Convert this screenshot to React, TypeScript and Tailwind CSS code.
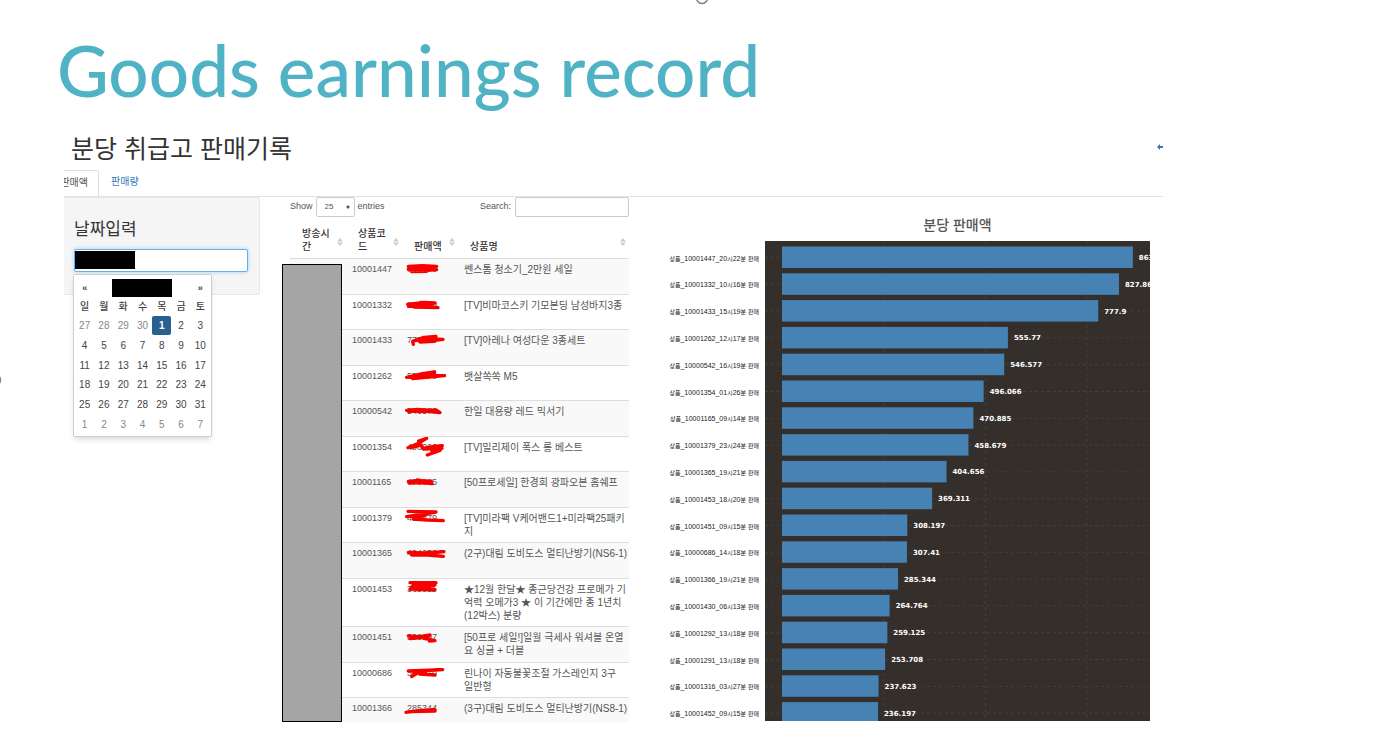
import React from "react";

type Product = { code: string; sales: string; name: string[]; mark: string };

const products: Product[] = [
  { code: "10001447", sales: "863000", name: ["쎈스톰 청소기_2만원 세일"], mark: "13,22 55,20 98,22 13,31 98,32 23,38 68,37 45,24 80,28" },
  { code: "10001332", sales: "827860", name: ["[TV]비마코스키 기모본딩 남성바지3종"], mark: "11,28 60,22 93,24 13,34 60,32 102,38 30,36 50,22" },
  { code: "10001433", sales: "777900", name: ["[TV]아레나 여성다운 3종세트"], mark: "28,43 26,34 60,22 96,19 34,32 70,26 117,28 48,36 90,34" },
  { code: "10001262", sales: "555770", name: ["뱃살쏙쏙 M5"], mark: "8,34 50,24 92,18 14,33 70,28 122,29 26,38 80,24" },
  { code: "10000542", sales: "546577", name: ["한일 대용량 레드 믹서기"], mark: "8,28 40,25 75,28 98,28 108,35 70,31 13,31" },
  { code: "10001354", sales: "496066", name: ["[TV]밀리제이 폭스 롱 베스트"], mark: "12,32 40,20 22,32 50,24 44,12 68,4 48,16 56,34 90,28 115,26 58,36 114,34 84,42 108,40 70,54" },
  { code: "10001165", sales: "470885", name: ["[50프로세일] 한경희 광파오븐 홈쉐프"], mark: "13,28 50,26 82,28 16,33 50,32 84,35 40,24 70,30" },
  { code: "10001379", sales: "458679", name: ["[TV]미라팩 V케어밴드1+미라팩25패키", "지"], mark: "12,10 96,12 60,18 8,26 68,20 28,33 70,36 118,38" },
  { code: "10001365", sales: "404656", name: ["(2구)대림 도비도스 멀티난방기(NS6-1)"], mark: "13,28 60,30 120,26 23,36 70,36 118,40 38,32" },
  { code: "10001453", sales: "369311", name: ["★12월 한달★ 종근당건강 프로메가 기", "억력 오메가3 ★ 이 기간에만 종 1년치", "(12박스) 분량"], mark: "18,11 96,11 28,18 18,31 93,18 36,32 93,32 50,22" },
  { code: "10001451", sales: "308197", name: ["[50프로 세일!]일월 극세사 워셔블 온열", "요 싱글 + 더블"], mark: "13,27 58,31 18,35 78,24 60,34 93,41 76,42" },
  { code: "10000686", sales: "307410", name: ["린나이 자동불꽃조절 가스레인지 3구", "일반형"], mark: "13,24 116,20 40,24 23,41 48,26 70,34 93,36 48,33" },
  { code: "10001366", sales: "285344", name: ["(3구)대림 도비도스 멀티난방기(NS8-1)"], mark: "6,43 50,37 93,36 18,41 93,39" },
];

const bars: [string, number, string][] = [
  ["상품_10001447_20시22분 판매", 863, "863.000"],
  ["상품_10001332_10시16분 판매", 829, "827.86"],
  ["상품_10001433_15시19분 판매", 777.9, "777.9"],
  ["상품_10001262_12시17분 판매", 555.77, "555.77"],
  ["상품_10000542_16시19분 판매", 546.577, "546.577"],
  ["상품_10001354_01시26분 판매", 496.066, "496.066"],
  ["상품_10001165_09시14분 판매", 470.885, "470.885"],
  ["상품_10001379_23시24분 판매", 458.679, "458.679"],
  ["상품_10001365_19시21분 판매", 404.656, "404.656"],
  ["상품_10001453_18시20분 판매", 369.311, "369.311"],
  ["상품_10001451_09시15분 판매", 308.197, "308.197"],
  ["상품_10000686_14시18분 판매", 307.41, "307.41"],
  ["상품_10001366_19시21분 판매", 285.344, "285.344"],
  ["상품_10001430_06시13분 판매", 264.764, "264.764"],
  ["상품_10001292_13시18분 판매", 259.125, "259.125"],
  ["상품_10001291_13시18분 판매", 253.708, "253.708"],
  ["상품_10001316_03시27분 판매", 237.623, "237.623"],
  ["상품_10001452_09시15분 판매", 236.197, "236.197"],
];

const weekdays = ["일", "월", "화", "수", "목", "금", "토"];
const weeks = [
  [27, 28, 29, 30, 1, 2, 3],
  [4, 5, 6, 7, 8, 9, 10],
  [11, 12, 13, 14, 15, 16, 17],
  [18, 19, 20, 21, 22, 23, 24],
  [25, 26, 27, 28, 29, 30, 31],
  [1, 2, 3, 4, 5, 6, 7],
];

function Calendar() {
  return (
    <div className="absolute top-[76px] left-[9px] rounded-xs border border-[#cfcfcf] bg-white p-px pt-[3px] shadow-md">
      <table className="h-[157px] w-[135px] table-fixed text-center text-[10px] leading-3 text-[#444]">
        <thead>
          <tr className="h-[19px]">
            <th className="p-0"><button className="block w-full text-[9px] leading-[18px] font-bold" aria-label="이전 달">«</button></th>
            <th colSpan={5} className="p-0">
              <div className="mx-auto h-[18px] w-[60px] bg-black" />
            </th>
            <th className="p-0"><button className="block w-full text-[9px] leading-[18px] font-bold" aria-label="다음 달">»</button></th>
          </tr>
          <tr className="h-[19px]">
            {weekdays.map((d) => <th key={d} className="p-0 font-medium">{d}</th>)}
          </tr>
        </thead>
        <tbody>
          {weeks.map((week, w) => (
            <tr key={w} className="h-[19px]">
              {week.map((d, i) => {
                const outside = (w === 0 && d > 20) || w === 5;
                const selected = w === 0 && d === 1;
                return (
                  <td key={i} className="p-0">
                    <button
                      className={
                        selected
                          ? "block h-[19px] w-full rounded-xs bg-[#286090] font-bold text-white"
                          : outside
                            ? "block h-[19px] w-full text-[#888]"
                            : "block h-[19px] w-full"
                      }
                    >
                      {d}
                    </button>
                  </td>
                );
              })}
            </tr>
          ))}
        </tbody>
      </table>
    </div>
  );
}

function SortIcon() {
  return (
    <svg className="mb-[7px] h-2 w-[6px] shrink-0" viewBox="0 0 6 8" fill="#ccc" aria-hidden="true">
      <path d="M3 0 6 3.4H0ZM3 8 0 4.6h6Z" />
    </svg>
  );
}

function HeadCell({ lines, className }: { lines: string[]; className: string }) {
  return (
    <th className={className}>
      <div className="flex h-[41px] items-end justify-between pr-[3px] pb-[5px] pl-3 text-left">
        <span>
          {lines.map((l) => <span key={l} className="block whitespace-nowrap">{l}</span>)}
        </span>
        <SortIcon />
      </div>
    </th>
  );
}

function rowClass(i: number, lineCount: number) {
  if (i === products.length - 1) return "h-6 border-t border-[#ddd] bg-[#f9f9f9]";
  if (lineCount === 3) return "h-12 border-t border-[#ddd]";
  return "h-9 border-t border-[#ddd] odd:bg-[#f9f9f9] even:h-[35px]";
}

function ProductTable() {
  return (
    <div className="min-w-0 flex-[339] text-[10px] text-[#555]">
      <div className="flex h-5 items-center justify-between text-[9px] font-medium">
        <label className="flex items-center gap-[3px]">
          Show
          <select className="h-5 w-[39px] appearance-none rounded-xs border border-[#ccc] bg-white bg-[radial-gradient(circle_at_31px_9px,#555_1px,transparent_2px)] pl-2 text-[8px]" defaultValue="25">
            <option>25</option>
          </select>
          entries
        </label>
        <label className="flex items-center gap-1">
          Search:
          <input type="search" className="h-5 w-[114px] rounded-xs border border-[#ccc] bg-white" />
        </label>
      </div>
      <div className="relative">
        <table className="w-full table-fixed border-collapse leading-[13px]">
          <thead className="text-[#333]">
            <tr>
              <HeadCell lines={["방송시", "간"]} className="w-14 p-0 font-medium" />
              <HeadCell lines={["상품코", "드"]} className="w-14 p-0 font-medium" />
              <HeadCell lines={["판매액"]} className="w-14 p-0 font-medium" />
              <HeadCell lines={["상품명"]} className="p-0 font-medium" />
            </tr>
          </thead>
          <tbody className="align-top">
            {products.map((p, i) => (
              <tr key={p.code} className={rowClass(i, p.name.length)}>
                <td />
                <td className="pt-1 pl-[6px] text-[9px]">{p.code}</td>
                <td className="pt-1 pl-[5px] text-[9px]">
                  <div className="relative">
                    {p.sales}
                    <svg className="absolute -top-1 -left-[3px] h-5 w-[42px]" viewBox="0 0 126 60" aria-hidden="true">
                      <polyline points={p.mark} fill="none" stroke="#f80000" strokeWidth="10" strokeLinecap="round" strokeLinejoin="round" />
                    </svg>
                  </div>
                </td>
                <td className="pt-1 pl-[6px] whitespace-nowrap">
                  {p.name.map((l) => <div key={l}>{l}</div>)}
                </td>
              </tr>
            ))}
          </tbody>
        </table>
        <div className="absolute top-[47px] bottom-0 -left-2 w-[60px] border border-black bg-[#a5a5a5]" />
      </div>
    </div>
  );
}

function AxisLabel({ text, y }: { text: string; y: number }) {
  return (
    <text x="94" y={y} textAnchor="end" fontSize="7" fill="#222">
      {text.split(/([가-힣]+)/).map((part, i) => (
        <tspan key={i} fontSize={i % 2 ? 6 : 7}>{part}</tspan>
      ))}
    </text>
  );
}

function Chart() {
  const pitch = 26.8;
  return (
    <div className="mr-[13px] ml-9 min-w-0 flex-[485] pt-5">
      <h3 className="pl-[100px] text-center text-[14px] leading-4 font-medium text-[#555]">분당 판매액</h3>
      <svg className="mt-2 block w-full" viewBox="0 0 485 480" role="img" aria-label="분당 판매액">
        <rect x="100" width="385" height="480" fill="#352f2c" />
        <g stroke="#443f3b" strokeWidth="1" strokeDasharray="3 3">
          {bars.map((b, i) => <line key={b[0]} x1="100" x2="485" y1={16.5 + i * pitch} y2={16.5 + i * pitch} />)}
          <line x1="219" x2="219" y1="0" y2="480" />
          <line x1="320.5" x2="320.5" y1="0" y2="480" />
          <line x1="422" x2="422" y1="0" y2="480" />
        </g>
        {bars.map(([label, value, text], i) => (
          <g key={label}>
            <AxisLabel text={label} y={19.5 + i * pitch} />
            <rect x="117" y={5.5 + i * pitch} width={value * 0.4065} height="21.5" fill="#4682b4" />
            <text x={123 + value * 0.4065} y={19 + i * pitch} fontSize="7" fontWeight="700" fill="#fff" fontFamily="DejaVu Sans, sans-serif">{text}</text>
          </g>
        ))}
      </svg>
    </div>
  );
}

export default function App() {
  return (
    <main className="relative min-h-screen overflow-hidden bg-white font-['Liberation_Sans','Noto_Sans_CJK_KR',sans-serif]">
      <svg className="absolute top-0 left-1/2 h-[5px] w-4 -translate-x-[6px]" viewBox="0 0 16 5" aria-hidden="true">
        <circle cx="8" cy="-2" r="5.5" fill="#fff" stroke="#888" strokeWidth="1.6" />
      </svg>
      <svg className="absolute top-[374px] left-0 h-3 w-1" viewBox="0 0 4 12" aria-hidden="true">
        <circle cx="-5" cy="6" r="5.5" fill="#fff" stroke="#888" strokeWidth="1.6" />
      </svg>
      <h1 className="pt-[22px] pb-0.5 pl-[57px] font-['Lato',sans-serif] text-[71px] leading-[96px] font-medium whitespace-nowrap text-[#4fb3c5]">
        Goods earnings record
      </h1>
      <section className="mr-[237px] ml-16">
        <header className="flex items-start justify-between pt-3 pl-[7px]">
          <h2 className="text-[25px] leading-[34px] text-[#333]">분당 취급고 판매기록</h2>
          <svg className="mt-3 h-[6px] w-[6px]" viewBox="0 0 6 6" aria-hidden="true">
            <path d="M0 3 3 0v2h3v2H3v2Z" fill="#337ab7" />
          </svg>
        </header>
        <nav className="mt-1 flex h-[27px] overflow-hidden border-b border-[#e3e3e3] text-[10px] leading-6">
          <a href="#amount" className="flex w-[35px] justify-end rounded-tr-xs border-t border-r border-[#ddd] pr-2.5 whitespace-nowrap text-[#555]">
            판매액
          </a>
          <a href="#volume" className="px-3 text-[#337ab7]">판매량</a>
        </nav>
        <div className="flex items-start">
          <aside className="relative h-[98px] w-[196px] shrink-0 rounded-r-xs border border-l-0 border-[#e8e8e8] bg-[#f5f5f5] pt-5 pl-[10px]">
            <label htmlFor="date" className="block text-[17px] leading-6 text-[#333]">날짜입력</label>
            <div className="relative mt-[7px] h-[23px] w-[174px]">
              <input id="date" className="block h-full w-full rounded-xs border border-[#66afe9] bg-white px-2 text-[10px] shadow-[0_0_4px_#a8d0f0] outline-none" />
              <div className="absolute top-[2px] left-px h-[18px] w-[60px] bg-black" />
            </div>
            <Calendar />
          </aside>
          <div className="w-[30px] shrink-0" />
          <ProductTable />
          <Chart />
        </div>
      </section>
    </main>
  );
}
